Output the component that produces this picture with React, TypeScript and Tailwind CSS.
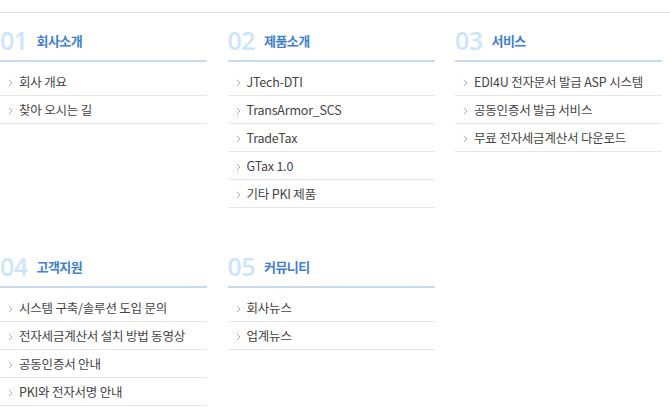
import React from "react";

type Section = {
  no: string;
  title: string;
  items: string[];
};

const sections: Section[] = [
  { no: "01", title: "회사소개", items: ["회사 개요", "찾아 오시는 길"] },
  { no: "02", title: "제품소개", items: ["JTech-DTI", "TransArmor_SCS", "TradeTax", "GTax 1.0", "기타 PKI 제품"] },
  { no: "03", title: "서비스", items: ["EDI4U 전자문서 발급 ASP 시스템", "공동인증서 발급 서비스", "무료 전자세금계산서 다운로드"] },
  {
    no: "04",
    title: "고객지원",
    items: ["시스템 구축/솔루션 도입 문의", "전자세금계산서 설치 방법 동영상", "공동인증서 안내", "PKI와 전자서명 안내"],
  },
  { no: "05", title: "커뮤니티", items: ["회사뉴스", "업계뉴스"] },
];

function Chevron() {
  return (
    <svg width="5" height="8" viewBox="0 0 5 8" className="shrink-0">
      <polyline points="0.8,0.8 4,4 0.8,7.2" fill="none" stroke="#b0b0b0" strokeWidth="1" />
    </svg>
  );
}

export default function App() {
  return (
    <div className="w-[670px] h-[416px] bg-white overflow-hidden [font-family:'Noto_Sans_CJK_KR','Noto_Sans',sans-serif]">
      <div className="mt-[12px] border-t border-[#dedede]">
        <div className="grid grid-cols-[207px_207px_207px] gap-x-[20.5px] gap-y-[31px]">
          {sections.map((s) => (
            <div key={s.no}>
              <div className="flex items-center pt-[14px] pb-[7px] border-b-2 border-[#c6dbf1]">
                <div className="flex items-center h-[26px]">
                  <span className="text-[25px] leading-none font-semibold text-[#cde4f9] [font-family:'Open_Sans',sans-serif] tracking-[-0.5px]">
                    {s.no}
                  </span>
                  <span className="ml-[9px] text-[13px] font-bold leading-none text-[#3f80cf] tracking-[-0.6px]">
                    {s.title}
                  </span>
                </div>
              </div>
              <ul className="mt-[6px]">
                {s.items.map((it) => (
                  <li
                    key={it}
                    className="flex items-center h-[28px] pt-[2px] border-b border-[#e6e6e6] pl-[8px] gap-[6px] text-[12.5px] leading-none text-[#444] tracking-[-0.2px]"
                  >
                    <Chevron />
                    <span>{it}</span>
                  </li>
                ))}
              </ul>
            </div>
          ))}
        </div>
      </div>
    </div>
  );
}
